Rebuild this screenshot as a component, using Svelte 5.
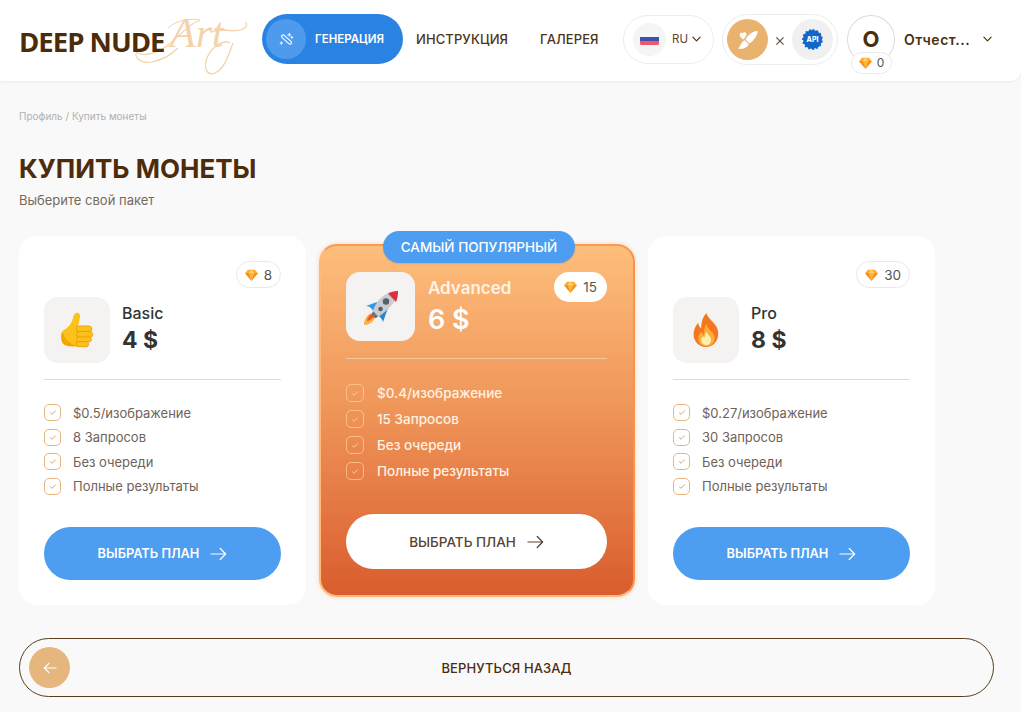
<script>
	const plans = [
		{
			name: 'Basic',
			price: '4 $',
			coins: 8,
			icon: 'thumb',
			features: ['$0.5/изображение', '8 Запросов', 'Без очереди', 'Полные результаты']
		},
		{
			name: 'Advanced',
			price: '6 $',
			coins: 15,
			icon: 'rocket',
			popular: true,
			features: ['$0.4/изображение', '15 Запросов', 'Без очереди', 'Полные результаты']
		},
		{
			name: 'Pro',
			price: '8 $',
			coins: 30,
			icon: 'fire',
			features: ['$0.27/изображение', '30 Запросов', 'Без очереди', 'Полные результаты']
		}
	];
</script>

{#snippet gem()}
	<svg class="gem" viewBox="0 0 14 13" aria-hidden="true">
		<path d="M3.2 .8h7.6L14 4.6 7 12.6 0 4.6z" fill="#fdae2e" />
		<path d="M0 4.6h14L7 12.6z" fill="#f98a1c" />
		<path d="M3.9 4.6h6.2L7 12.6z" fill="#fdb53c" />
		<path d="M3.9 4.6 7 .8l3.1 3.8z" fill="#ffd46a" />
	</svg>
{/snippet}

{#snippet chevron()}
	<svg class="chev" viewBox="0 0 10 6" aria-hidden="true">
		<path d="M1 1l4 4 4-4" fill="none" stroke="#4d3010" stroke-width="1.3" stroke-linecap="round" stroke-linejoin="round" />
	</svg>
{/snippet}

{#snippet arrow()}
	<svg class="arrow" viewBox="0 0 18 14" aria-hidden="true">
		<path d="M1 7h15.5M10.8 1.2 16.6 7l-5.8 5.8" fill="none" stroke="currentColor" stroke-width="1.3" stroke-linecap="round" stroke-linejoin="round" />
	</svg>
{/snippet}

{#snippet emoji(kind)}
	{#if kind === 'thumb'}
		<svg class="emoji" viewBox="0 0 36 40" aria-hidden="true">
			<path d="M2 21c3-2 9-6 11-12 1-3 1-7 4-8 3-1 5 2 4 6-.5 3-1.500 6-2 9h8v21H12c-3 0-6-1-8-2-3-2-4-9-2-14z" fill="#fcc21b" />
			<path d="M2 21c-2 5-1 12 2 14 2 1 5 2 8 2h7C10 35 5 29 2 21z" fill="#f2a600" />
			<rect x="17" y="15" width="17" height="6.500" rx="3.250" fill="#fcc21b" stroke="#e59600" stroke-width=".8" />
			<rect x="17.500" y="21" width="17.500" height="6.500" rx="3.250" fill="#fcc21b" stroke="#e59600" stroke-width=".8" />
			<rect x="17.500" y="27" width="16" height="5.500" rx="2.750" fill="#fcc21b" stroke="#e59600" stroke-width=".8" />
			<rect x="17" y="32" width="13.500" height="5.500" rx="2.750" fill="#fcc21b" stroke="#e59600" stroke-width=".8" />
		</svg>
	{:else if kind === 'rocket'}
		<svg class="emoji rocket" viewBox="10 5 40 40" aria-hidden="true">
			<path d="M13 43c0-5 3-10 7-12l4 5c-2 4-6 7-11 7z" fill="#fbb03b" />
			<path d="M16 39c.5-3 2-5.500 4.500-7l2 2.500c-1.500 2.500-3.500 4-6.500 4.500z" fill="#ea5a28" />
			<path d="M26 20 15 24c3.500 0 6.500 3 7.500 6l6-5z" fill="#2f9be0" />
			<path d="M37 26 32 40c-1-3-3-5.500-5.500-7l5-6z" fill="#2b86cc" />
			<path d="M47 9c-7 0-14 3-20 10-3 4-5 9-6 12l4 5c4-2 8-5 12-9 6-6 10-12 10-18z" fill="#c9ccd0" />
			<path d="M21 31c-.5 1.500 0 2 1 3.500 1 1 1.500 1.500 3 1.500l2-1.500-4.500-5z" fill="#6d7378" />
			<path d="M47 9c-4 0-7 1-10 2.500l8 8.500c1.500-3.500 2-7.500 2-11z" fill="#dd2e3a" />
			<circle cx="35" cy="19.500" r="3.200" fill="#55606b" />
			<circle cx="29.500" cy="27" r="2.300" fill="#55606b" />
		</svg>
	{:else}
		<svg class="emoji fire" viewBox="0 0 30 38" aria-hidden="true">
			<path d="M15 0c1 6 9 10 12 17 3 8 0 20-12 21C4 38-1 28 1 20c1-4 3-7 5-9 0 3 1 5 3 6 0-7 2-13 6-17z" fill="#f4771f" />
			<path d="M15 12c0 5 8 9 9 15 .5 6-4 10-9 10-6 0-10-4-9-10 .5-3 2-5 4-6 0 2 1 3 2 4 0-5 1-10 3-13z" fill="#fcae36" />
			<path d="M15 21c1 3 5 5 5 9 0 3-2 6-5 6s-6-2-6-6c0-2 1-3 2.500-4 .5 1 1 1.500 1.500 1.500 0-2 .5-4.500 2-6.500z" fill="#fdeeb0" />
		</svg>
	{/if}
{/snippet}

<div class="page">
	<header class="header">
		<div class="logo">
			<span class="logo-art">Art</span>
			<svg class="logo-swirl" viewBox="0 0 125 65" aria-hidden="true">
				<path d="M70 10C58 14 46 30 34 38 24 45 10 46 7 42 3 46 10 54 22 52 32 50 42 44 48 38" fill="none" stroke="#f4d3ab" stroke-width="1.200" />
				<path d="M70 10C62 8 46 10 38 18" fill="none" stroke="#f4d3ab" stroke-width="1" />
				<path d="M116 12c3 8-8 10-22 8-4 0-8 0-12 2M100 33c-8-4-21 6-24 18-2 9 2 15 9 12 10-4 14-20 18-30" fill="none" stroke="#f4d3ab" stroke-width="1.300" />
			</svg>
			<span class="logo-main">DEEP NUDE</span>
		</div>

		<nav class="nav">
			<div class="nav-active">
				<span class="nav-icon">
					<svg viewBox="0 0 16 16" aria-hidden="true">
						<rect x="1.500" y="6.300" width="13" height="3.400" rx="1.700" transform="rotate(42 8 8)" fill="none" stroke="#fff" stroke-width="1.200" />
						<path d="M11 1.500v3M9.500 3h3M13.700 4.700v2M12.700 5.700h2M2.500 10.500v2.600M1.200 11.800h2.600" fill="none" stroke="#fff" stroke-width="1" stroke-linecap="round" />
					</svg>
				</span>
				<span>ГЕНЕРАЦИЯ</span>
			</div>
			<span class="nav-link first">ИНСТРУКЦИЯ</span>
			<span class="nav-link">ГАЛЕРЕЯ</span>
		</nav>

		<div class="lang">
			<span class="flag-wrap">
				<span class="flag"><i class="w"></i><i class="b"></i><i class="r"></i></span>
			</span>
			<span class="lang-code">RU</span>
			{@render chevron()}
		</div>

		<div class="combo">
			<span class="combo-brush">
				<svg viewBox="15.500 15.500 25 25" aria-hidden="true">
					<path d="M38 19.500c.8 3-3.500 9.500-8 12.500l-4-4c2-4 7.500-9 12-8.500z" fill="#fff" />
					<path d="M25.300 28.800l4 4c-1.500 3.500-6 5.500-10.800 4.200 2.700-1.700 2.500-6.500 6.800-8.200z" fill="#fff" />
					<path d="M24 28c-2-1-4-3-3.800-5 .2-1.700 2-2.200 3-1.200 .5-1.500 2.800-1.500 3.600 0 .6 1.200 0 2.500-2.800 6.200z" fill="#fff" />
				</svg>
			</span>
			<span class="times">×</span>
			<span class="combo-api">
				<span class="gear"><span class="gear-text">API</span></span>
			</span>
		</div>

		<div class="user">
			<div class="avatar">
				О
				<span class="avatar-coins">{@render gem()}0</span>
			</div>
			<span class="user-name">Отчест...</span>
			{@render chevron()}
		</div>
	</header>

	<main class="content">
		<p class="crumbs">Профиль / Купить монеты</p>
		<h1>КУПИТЬ МОНЕТЫ</h1>
		<p class="subtitle">Выберите свой пакет</p>

		<section class="plans">
			{#each plans as plan}
				<article class="card" class:popular={plan.popular}>
					{#if plan.popular}
						<div class="tag">САМЫЙ ПОПУЛЯРНЫЙ</div>
					{:else}
						<div class="coins-row">
							<span class="coins">{@render gem()}{plan.coins}</span>
						</div>
					{/if}

					<div class="plan-head">
						<div class="plan-icon">{@render emoji(plan.icon)}</div>
						<div class="plan-title">
							<div class="plan-name">{plan.name}</div>
							<div class="plan-price">{plan.price}</div>
						</div>
						{#if plan.popular}
							<span class="coins">{@render gem()}{plan.coins}</span>
						{/if}
					</div>

					<ul class="features">
						{#each plan.features as feature}
							<li>
								<span class="check">
									<svg viewBox="0 0 10 8" aria-hidden="true">
										<path d="M1.500 4l2.300 2.300L8.500 1.500" fill="none" stroke="currentColor" stroke-width="1.100" />
									</svg>
								</span>
								{feature}
							</li>
						{/each}
					</ul>

					<button class="choose">ВЫБРАТЬ ПЛАН {@render arrow()}</button>
				</article>
			{/each}
		</section>

		<button class="back">
			<span class="back-circle">
				<svg viewBox="0 0 14 12" aria-hidden="true">
					<path d="M13 6H1.500M6 1.300 1.300 6 6 10.700" fill="none" stroke="#fff" stroke-width="1.200" stroke-linecap="round" stroke-linejoin="round" />
				</svg>
			</span>
			ВЕРНУТЬСЯ НАЗАД
		</button>
	</main>
</div>

<style>
	:global(body) {
		background: #f9f9f9;
	}
	.page {
		height: 712px;
		overflow: hidden;
		font-family: Inter, 'Liberation Sans', sans-serif;
		color: #4d2c0c;
		background: #f9f9f9;
	}

	.header {
		height: 81px;
		box-sizing: border-box;
		display: flex;
		align-items: center;
		padding: 0 0 3px 20px;
		background: #fff;
		border-bottom-right-radius: 10px;
		box-shadow: 0 1px 3px rgba(0, 0, 0, 0.06);
	}

	.logo {
		position: relative;
		width: 242px;
		height: 78px;
		flex: none;
		display: flex;
		align-items: center;
	}
	.logo-main {
		margin-top: 4px;
		margin-left: -1px;
		font-family: 'Open Sans', sans-serif;
		font-size: 27.500px;
		font-weight: 700;
		letter-spacing: -1px;
		color: #4d2c0c;
		position: relative;
		z-index: 1;
	}
	.logo-art {
		position: absolute;
		left: 150px;
		top: 8px;
		font-family: 'Liberation Serif', serif;
		font-style: italic;
		font-size: 42px;
		line-height: 50px;
		color: #f4d3ab;
	}
	.logo-swirl {
		position: absolute;
		left: 110px;
		top: 10px;
		width: 125px;
		height: 65px;
	}

	.nav {
		display: flex;
		align-items: center;
		font-size: 13px;
		font-weight: 500;
		letter-spacing: 0.1px;
		width: 361px;
		flex: none;
	}
	.nav-active {
		width: 141px;
		height: 50px;
		box-sizing: border-box;
		padding-left: 4px;
		display: flex;
		align-items: center;
		gap: 9px;
		border-radius: 25px;
		background: #2a83e3;
		color: #fff;
		font-size: 11.500px;
		font-weight: 600;
		letter-spacing: 0;
	}
	.nav-icon {
		width: 40px;
		height: 40px;
		border-radius: 50%;
		background: #4e9bee;
		display: flex;
		align-items: center;
		justify-content: center;
	}
	.nav-icon svg {
		width: 15px;
		height: 15px;
	}
	.nav-link {
		margin-left: 32px;
		color: #4d3518;
	}
	.nav-link.first {
		margin-left: 13px;
	}

	.lang {
		width: 91px;
		height: 49px;
		box-sizing: border-box;
		flex: none;
		display: flex;
		align-items: center;
		padding-left: 9px;
		border: 1px solid #ececec;
		border-radius: 25px;
	}
	.flag-wrap {
		width: 33px;
		height: 33px;
		border-radius: 50%;
		background: #f5f5f5;
		display: flex;
		align-items: center;
		justify-content: center;
	}
	.flag {
		width: 19px;
		height: 11px;
		display: flex;
		flex-direction: column;
		border-radius: 1.500px;
		overflow: hidden;
	}
	.flag i {
		flex: 1;
	}
	.flag .w {
		background: #f7f7f7;
	}
	.flag .b {
		background: #3f51a8;
	}
	.flag .r {
		background: #ee5a6a;
	}
	.lang-code {
		margin-left: 6px;
		font-size: 11.500px;
		color: #5b4630;
	}
	.chev {
		width: 9px;
		height: 6px;
		margin-left: 4px;
	}

	.combo {
		width: 116px;
		height: 51px;
		box-sizing: border-box;
		flex: none;
		margin-left: 8px;
		padding: 0 4px;
		display: flex;
		align-items: center;
		justify-content: space-between;
		border: 1px solid #ececec;
		border-radius: 26px;
	}
	.combo-brush,
	.combo-api {
		width: 41px;
		height: 41px;
		border-radius: 50%;
		display: flex;
		align-items: center;
		justify-content: center;
	}
	.combo-brush {
		background: #e9b26e;
	}
	.combo-brush svg {
		width: 25px;
		height: 25px;
	}
	.combo-api {
		background: #f0f0f0;
	}
	.times {
		font-size: 18px;
		font-weight: 300;
		color: #555;
	}
	.gear {
		width: 19px;
		height: 19px;
		border-radius: 50%;
		background: #1268c9;
		outline: 2px dotted #1268c9;
		outline-offset: -1px;
		display: flex;
		align-items: center;
		justify-content: center;
	}
	.gear-text {
		font-size: 7px;
		font-weight: 800;
		color: #fff;
	}

	.user {
		display: flex;
		align-items: center;
		margin-left: 9px;
	}
	.avatar {
		position: relative;
		width: 48px;
		height: 49px;
		box-sizing: border-box;
		display: flex;
		align-items: center;
		justify-content: center;
		padding-bottom: 1px;
		border: 1px solid #dcdcdc;
		border-radius: 50%;
		font-size: 22px;
		font-weight: 700;
		color: #4d2c0c;
	}
	.avatar-coins {
		position: absolute;
		left: 3px;
		top: 36px;
		width: 41px;
		height: 22px;
		box-sizing: border-box;
		display: flex;
		align-items: center;
		justify-content: center;
		gap: 5px;
		background: #fff;
		border: 1px solid #ececec;
		border-radius: 11px;
		font-size: 12px;
		font-weight: 400;
		color: #555;
	}
	.user-name {
		margin-left: 9px;
		width: 75px;
		font-size: 14px;
		font-weight: 600;
		letter-spacing: 0.5px;
		color: #4d3010;
	}

	.content {
		padding: 28px 27px 0 19px;
	}
	.crumbs {
		margin: 0;
		font-size: 10px;
		line-height: 14px;
		color: #b0b0b0;
	}
	h1 {
		margin: 29px 0 0;
		font-size: 26px;
		line-height: 33px;
		font-weight: 700;
		color: #4d2c0c;
	}
	.subtitle {
		margin: 6px 0 0;
		font-size: 13px;
		line-height: 18px;
		color: #76695c;
	}

	.plans {
		display: grid;
		grid-template-columns: 287px 316px 287px;
		gap: 13px;
		align-items: center;
		margin-top: 27px;
	}
	.card {
		position: relative;
		box-sizing: border-box;
		height: 369px;
		padding: 25px;
		background: #fff;
		border-radius: 18px;
		display: flex;
		flex-direction: column;
	}
	.card.popular {
		height: 353px;
		padding: 26px 26px 26px 25px;
		border: 2px solid;
		border-color: #f99a52 #f9934a #ffb87e #ffb87e;
		background: linear-gradient(180deg, #fdbe7c 0%, #f0975a 45%, #d95c2d 100%) border-box;
		color: #fff;
		box-shadow: 0 0 4px rgba(255, 190, 130, 0.6);
	}
	.tag {
		position: absolute;
		left: 62px;
		top: -15px;
		width: 192px;
		height: 32px;
		display: flex;
		align-items: center;
		justify-content: center;
		border-radius: 16px;
		background: #4d9df0;
		color: #fff;
		font-size: 13.500px;
		font-weight: 500;
		box-shadow: 0 1px 2px rgba(0, 0, 0, 0.1);
	}

	.coins-row {
		display: flex;
		justify-content: flex-end;
		height: 27px;
		margin-bottom: 9px;
	}
	.coins {
		display: inline-flex;
		align-items: center;
		gap: 6px;
		height: 27px;
		box-sizing: border-box;
		padding: 0 8px;
		background: #fff;
		border: 1px solid #e9e9e9;
		border-radius: 14px;
		font-size: 13.500px;
		color: #555;
	}
	.gem {
		width: 13px;
		height: 12px;
		flex: none;
	}

	.plan-head {
		display: flex;
		padding-bottom: 16px;
		border-bottom: 1px solid #dcdcdc;
	}
	.plan-icon {
		width: 66px;
		height: 66px;
		flex: none;
		display: flex;
		align-items: center;
		justify-content: center;
		background: #f5f3f2;
		border-radius: 14px;
	}
	.emoji {
		width: 36px;
		height: 37px;
	}
	.emoji.fire {
		width: 29px;
		height: 34px;
	}
	.plan-title {
		margin-left: 12px;
		flex: 1;
	}
	.plan-name {
		margin-top: 6px;
		font-size: 16px;
		line-height: 20px;
		font-weight: 500;
		color: #333;
	}
	.plan-price {
		margin-top: 3px;
		font-size: 23px;
		line-height: 29px;
		font-weight: 700;
		color: #333;
	}

	.features {
		list-style: none;
		margin: 24px 0 0;
		padding: 0;
		display: flex;
		flex-direction: column;
		gap: 7px;
		flex: 1;
	}
	.features li {
		display: flex;
		align-items: center;
		gap: 12px;
		height: 17.500px;
		font-size: 13px;
		color: #6f6259;
	}
	.check {
		width: 17px;
		height: 17px;
		box-sizing: border-box;
		flex: none;
		display: flex;
		align-items: center;
		justify-content: center;
		border: 1.500px solid #e8b67f;
		border-radius: 5px;
		color: #d39a5e;
	}
	.check svg {
		width: 8px;
		height: 7px;
	}

	.choose {
		width: 100%;
		height: 53px;
		display: flex;
		align-items: center;
		justify-content: center;
		gap: 11px;
		border: 0;
		border-radius: 27px;
		background: #4d9df0;
		color: #fff;
		font-family: inherit;
		font-size: 12.800px;
		font-weight: 600;
	}
	.arrow {
		width: 17px;
		height: 14px;
	}

	.popular .plan-head {
		padding-bottom: 17px;
		border-bottom-color: rgba(255, 255, 255, 0.4);
	}
	.popular .plan-icon {
		width: 69px;
		height: 69px;
	}
	.popular .emoji.rocket {
		width: 40px;
		height: 40px;
	}
	.popular .plan-title {
		margin-left: 13px;
	}
	.popular .plan-name {
		margin-top: 6px;
		font-size: 17px;
		font-weight: 600;
		color: #fff3e6;
	}
	.popular .plan-price {
		margin-top: 5px;
		font-size: 27px;
		line-height: 33px;
		font-weight: 600;
		color: #fff;
	}
	.popular .coins {
		height: 30px;
		padding: 0 10px;
		border: 0;
		border-radius: 15px;
	}
	.popular .features {
		margin-top: 25px;
		gap: 8px;
	}
	.popular .features li {
		height: 18px;
		gap: 13px;
		font-size: 13.500px;
		font-weight: 500;
		color: #fff1e2;
	}
	.popular .check {
		width: 18px;
		height: 18px;
		border-color: rgba(255, 205, 150, 0.75);
		color: rgba(255, 225, 190, 0.85);
	}
	.popular .choose {
		height: 55px;
		border-radius: 28px;
		background: #fff;
		color: #5a4330;
		font-weight: 500;
		font-size: 13.500px;
	}

	.back {
		position: relative;
		display: flex;
		align-items: center;
		justify-content: center;
		width: 100%;
		height: 59px;
		margin-top: 33px;
		box-sizing: border-box;
		border: 1px solid #5a3d1e;
		border-radius: 30px;
		background: transparent;
		color: #4d2c0c;
		font-family: inherit;
		font-size: 13px;
		font-weight: 500;
		letter-spacing: 0.1px;
	}
	.back-circle {
		position: absolute;
		left: 9px;
		top: 8px;
		width: 41px;
		height: 41px;
		display: flex;
		align-items: center;
		justify-content: center;
		border-radius: 50%;
		background: #e5b77f;
	}
	.back-circle svg {
		width: 14px;
		height: 12px;
	}
</style>
